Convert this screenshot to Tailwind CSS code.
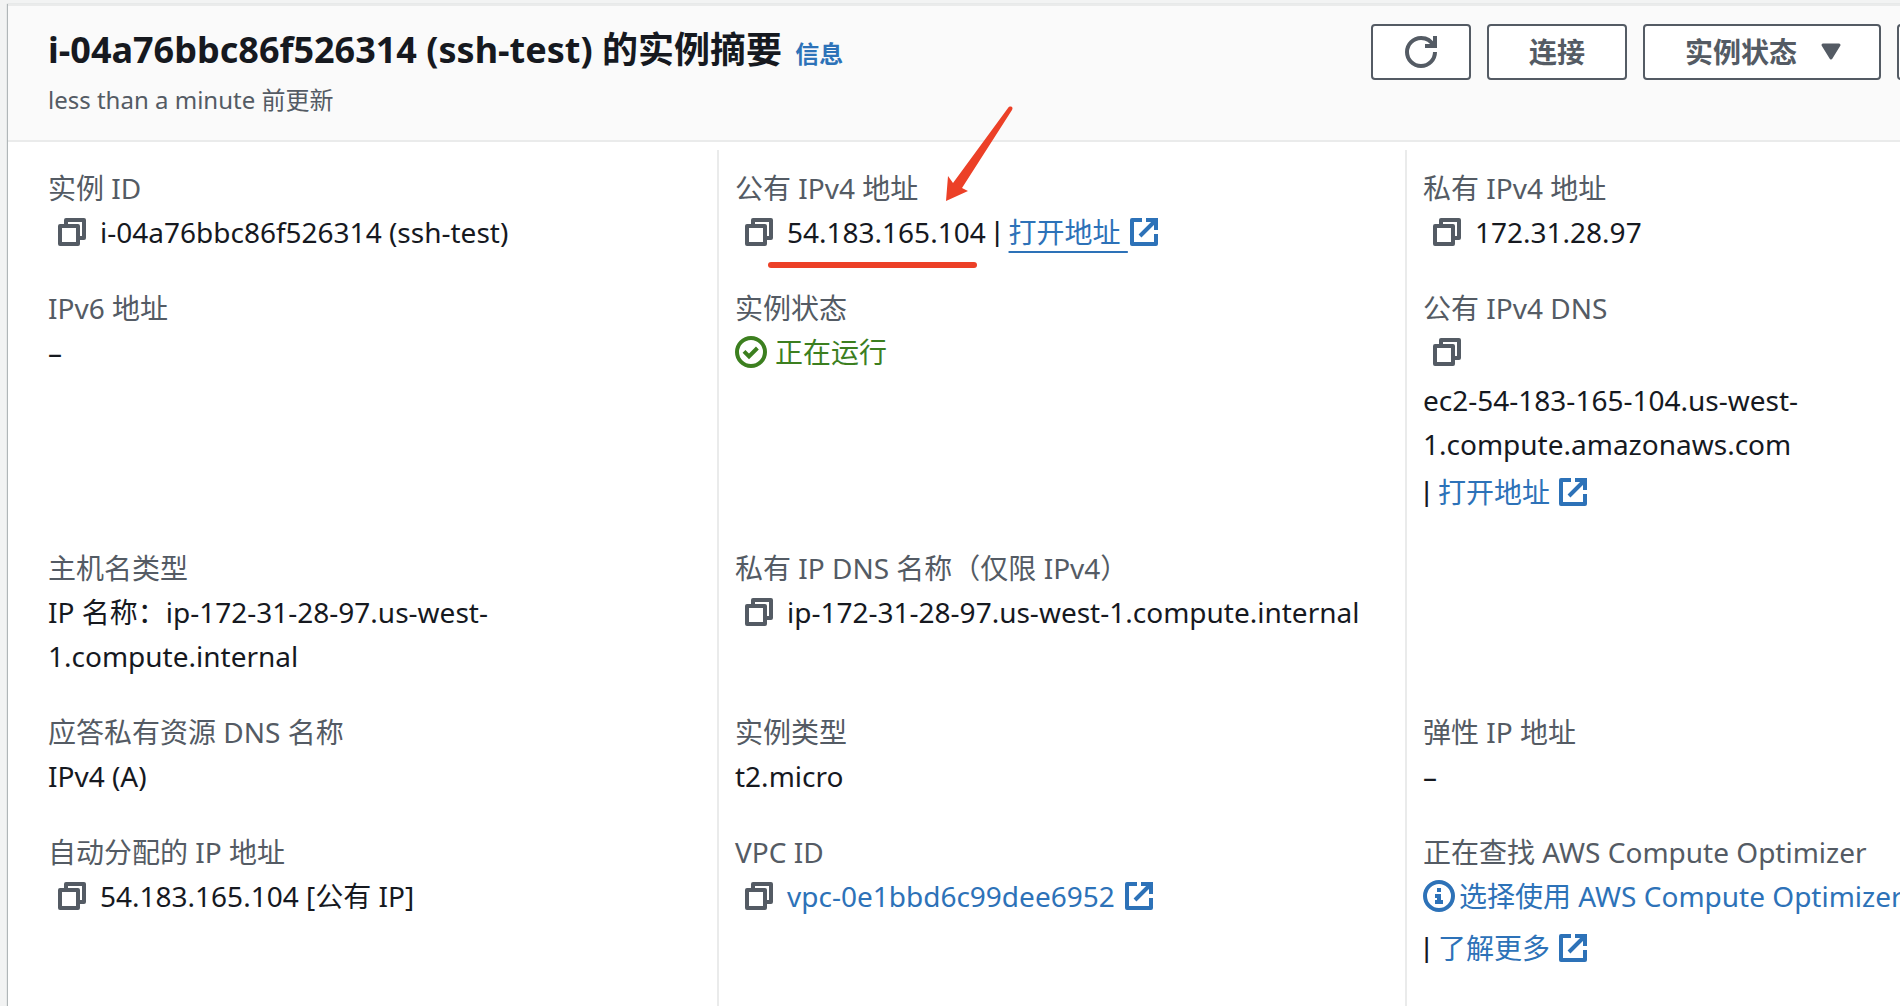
<!DOCTYPE html>
<html lang="zh-CN">
<head>
  <meta charset="UTF-8" />
  <meta name="viewport" content="width=device-width, initial-scale=1.0" />
  <title>i-04a76bbc86f526314 (ssh-test) 的实例摘要</title>
  <script src="https://cdn.jsdelivr.net/npm/@tailwindcss/browser@4"></script>
</head>
<body class="bg-[#f2f3f3] text-[#16191f] font-['Noto_Sans','Noto_Sans_CJK_SC',sans-serif] text-[28px] leading-[44px] overflow-hidden">

<!-- Icons -->
<svg class="hidden">
  <symbol id="copy" viewBox="0 0 16 16">
    <path d="M2 5h9v9H2z M5 5V2h9v9h-3" fill="none" stroke="currentColor" stroke-width="2" stroke-linejoin="round" />
  </symbol>
  <symbol id="external" viewBox="0 0 16 16">
    <path d="M14 9v5H2V2h5" fill="none" stroke="currentColor" stroke-width="2" stroke-linejoin="round" />
    <path d="M9 2h5v5 M6 10l8-8" fill="none" stroke="currentColor" stroke-width="2" />
  </symbol>
  <symbol id="refresh" viewBox="0 0 16 16">
    <path d="M10 5h5V0" fill="none" stroke="currentColor" stroke-width="2" />
    <path d="M15 8a7 7 0 0 1-14 0 7 7 0 0 1 7-7 6.9 6.9 0 0 1 6.3 4" fill="none" stroke="currentColor" stroke-width="2" />
  </symbol>
  <symbol id="caret" viewBox="0 0 16 16">
    <path d="M4 4.5h8L8 11z" fill="currentColor" stroke="currentColor" stroke-width="1.5" stroke-linejoin="round" />
  </symbol>
  <symbol id="success" viewBox="0 0 16 16">
    <circle cx="8" cy="8" r="7" fill="none" stroke="currentColor" stroke-width="2" />
    <path d="M4.5 7.7l2.5 2.5 4.2-4.2" fill="none" stroke="currentColor" stroke-width="2" />
  </symbol>
  <symbol id="info" viewBox="0 0 16 16">
    <circle cx="8" cy="8" r="7" fill="none" stroke="currentColor" stroke-width="2" />
    <path d="M7 4h2v2H7z M6 7h3v3h1v2H6v-2h1V9H6z" fill="currentColor" />
  </symbol>
</svg>

<!-- Instance summary, wider than the window -->
<main class="ml-2 mt-1 w-[calc(100%+185px)] min-h-screen flex flex-col bg-white border-t-2 border-[#eaebeb] shadow-[-1px_0_1px_#b0b6b8]">

  <header class="flex justify-between items-start gap-4 pl-10 pr-10 pt-[18px] pb-4 bg-[#fafafa] border-b-2 border-[#eaebeb]">
    <div class="min-w-0">
      <h1 class="text-[36px] leading-[52px] font-bold whitespace-nowrap">i-04a76bbc86f526314 (ssh-test) 的实例摘要
        <a href="#" class="ml-1 text-2xl text-[#2d72b8]">信息</a>
      </h1>
      <p class="text-2xl leading-12 text-[#545b64]">less than a minute 前更新</p>
    </div>
    <div class="flex gap-4 shrink-0 text-[#545b64]">
      <button aria-label="刷新" class="h-14 px-8 bg-white border-2 border-[#545b64] rounded-sm">
        <svg class="size-8"><use href="#refresh" /></svg>
      </button>
      <button class="h-14 px-10 bg-white border-2 border-[#545b64] rounded-sm font-bold">连接</button>
      <button class="h-14 pl-10 pr-8 flex items-center gap-[18px] bg-white border-2 border-[#545b64] rounded-sm font-bold">
        实例状态 <svg class="size-8"><use href="#caret" /></svg>
      </button>
      <button aria-label="操作" class="h-14 w-[156px] bg-white border-2 border-[#545b64] rounded-sm"></button>
    </div>
  </header>

  <dl class="grow mt-2 ml-[21px] grid grid-cols-3 grid-rows-[auto_auto_auto_auto_1fr]">
    <!-- row 1 -->
    <div class="pl-[19px] pt-4 pb-8">
      <dt class="text-[#545b64]">实例 ID</dt>
      <dd class="flex items-center gap-3 pl-2">
        <button aria-label="复制"><svg class="size-8 text-[#545b64]"><use href="#copy" /></svg></button>
        <span>i-04a76bbc86f526314 (ssh-test)</span>
      </dd>
    </div>
    <div class="relative pl-4 pt-4 pb-8 border-l-2 border-[#eaebeb]">
      <dt class="text-[#545b64]">公有 IPv4 地址</dt>
      <dd class="flex items-center gap-3 pl-2">
        <button aria-label="复制"><svg class="size-8 text-[#545b64]"><use href="#copy" /></svg></button>
        <span class="flex items-center whitespace-pre">54.183.165.104<span class="font-['Liberation_Sans',sans-serif]"> | </span><a href="#" class="flex items-center text-[#2d72b8]"><span class="underline decoration-2 underline-offset-8">打开地址 </span><svg class="size-8"><use href="#external" /></svg></a></span>
      </dd>
      <!-- arrow and underline drawn over the address -->
      <svg class="absolute left-0 top-0 size-1 overflow-visible pointer-events-none" fill="#ec4027">
        <path d="M289 -42c2 -3 6 -1 4 2L243 38l6 3L227 51l2 -25l5 7z" />
        <rect x="49" y="112" width="209" height="6" rx="3" />
      </svg>
    </div>
    <div class="pl-4 pt-4 pb-8 border-l-2 border-[#eaebeb]">
      <dt class="text-[#545b64]">私有 IPv4 地址</dt>
      <dd class="flex items-center gap-3 pl-2">
        <button aria-label="复制"><svg class="size-8 text-[#545b64]"><use href="#copy" /></svg></button>
        <span>172.31.28.97</span>
      </dd>
    </div>

    <!-- row 2 -->
    <div class="pl-[19px] pb-8">
      <dt class="text-[#545b64]">IPv6 地址</dt>
      <dd>–</dd>
    </div>
    <div class="pl-4 pb-8 border-l-2 border-[#eaebeb]">
      <dt class="text-[#545b64]">实例状态</dt>
      <dd class="flex items-center gap-2 text-[#3c7f1f]">
        <svg class="size-8"><use href="#success" /></svg>正在运行
      </dd>
    </div>
    <div class="pl-4 pb-8 border-l-2 border-[#eaebeb]">
      <dt class="text-[#545b64]">公有 IPv4 DNS</dt>
      <dd>
        <div class="flex items-center h-11 mb-1 pl-2">
          <button aria-label="复制"><svg class="size-8 text-[#545b64]"><use href="#copy" /></svg></button>
        </div>
        <div>ec2-54-183-165-104.us-west-<br>1.compute.amazonaws.com</div>
        <div class="flex items-center mt-1 whitespace-pre"><span class="font-['Liberation_Sans',sans-serif]">| </span><a href="#" class="flex items-center text-[#2d72b8]">打开地址 <svg class="size-8"><use href="#external" /></svg></a></div>
      </dd>
    </div>

    <!-- row 3 -->
    <div class="pl-[19px] pb-8">
      <dt class="text-[#545b64]">主机名类型</dt>
      <dd>IP 名称：ip-172-31-28-97.us-west-<br>1.compute.internal</dd>
    </div>
    <div class="pl-4 pb-8 border-l-2 border-[#eaebeb]">
      <dt class="text-[#545b64]">私有 IP DNS 名称（仅限 IPv4）</dt>
      <dd class="flex items-center gap-3 pl-2">
        <button aria-label="复制"><svg class="size-8 text-[#545b64]"><use href="#copy" /></svg></button>
        <span class="whitespace-nowrap">ip-172-31-28-97.us-west-1.compute.internal</span>
      </dd>
    </div>
    <div class="border-l-2 border-[#eaebeb]"></div>

    <!-- row 4 -->
    <div class="pl-[19px] pb-8">
      <dt class="text-[#545b64]">应答私有资源 DNS 名称</dt>
      <dd>IPv4 (A)</dd>
    </div>
    <div class="pl-4 pb-8 border-l-2 border-[#eaebeb]">
      <dt class="text-[#545b64]">实例类型</dt>
      <dd>t2.micro</dd>
    </div>
    <div class="pl-4 pb-8 border-l-2 border-[#eaebeb]">
      <dt class="text-[#545b64]">弹性 IP 地址</dt>
      <dd>–</dd>
    </div>

    <!-- row 5 -->
    <div class="pl-[19px] pb-8">
      <dt class="text-[#545b64]">自动分配的 IP 地址</dt>
      <dd class="flex items-center gap-3 pl-2">
        <button aria-label="复制"><svg class="size-8 text-[#545b64]"><use href="#copy" /></svg></button>
        <span>54.183.165.104 [公有 IP]</span>
      </dd>
    </div>
    <div class="pl-4 pb-8 border-l-2 border-[#eaebeb]">
      <dt class="text-[#545b64]">VPC ID</dt>
      <dd class="flex items-center gap-3 pl-2">
        <button aria-label="复制"><svg class="size-8 text-[#545b64]"><use href="#copy" /></svg></button>
        <a href="#" class="flex items-center gap-2 text-[#2d72b8]">vpc-0e1bbd6c99dee6952 <svg class="size-8"><use href="#external" /></svg></a>
      </dd>
    </div>
    <div class="pl-4 pb-8 border-l-2 border-[#eaebeb]">
      <dt class="text-[#545b64]">正在查找 AWS Compute Optimizer</dt>
      <dd>
        <a href="#" class="flex items-center gap-1 text-[#2d72b8] whitespace-nowrap"><svg class="size-8"><use href="#info" /></svg>选择使用 AWS Compute Optimizer</a>
        <div class="flex items-center mt-2 whitespace-pre"><span class="font-['Liberation_Sans',sans-serif]">| </span><a href="#" class="flex items-center text-[#2d72b8]">了解更多 <svg class="size-8"><use href="#external" /></svg></a></div>
      </dd>
    </div>
  </dl>
</main>

</body>
</html>
